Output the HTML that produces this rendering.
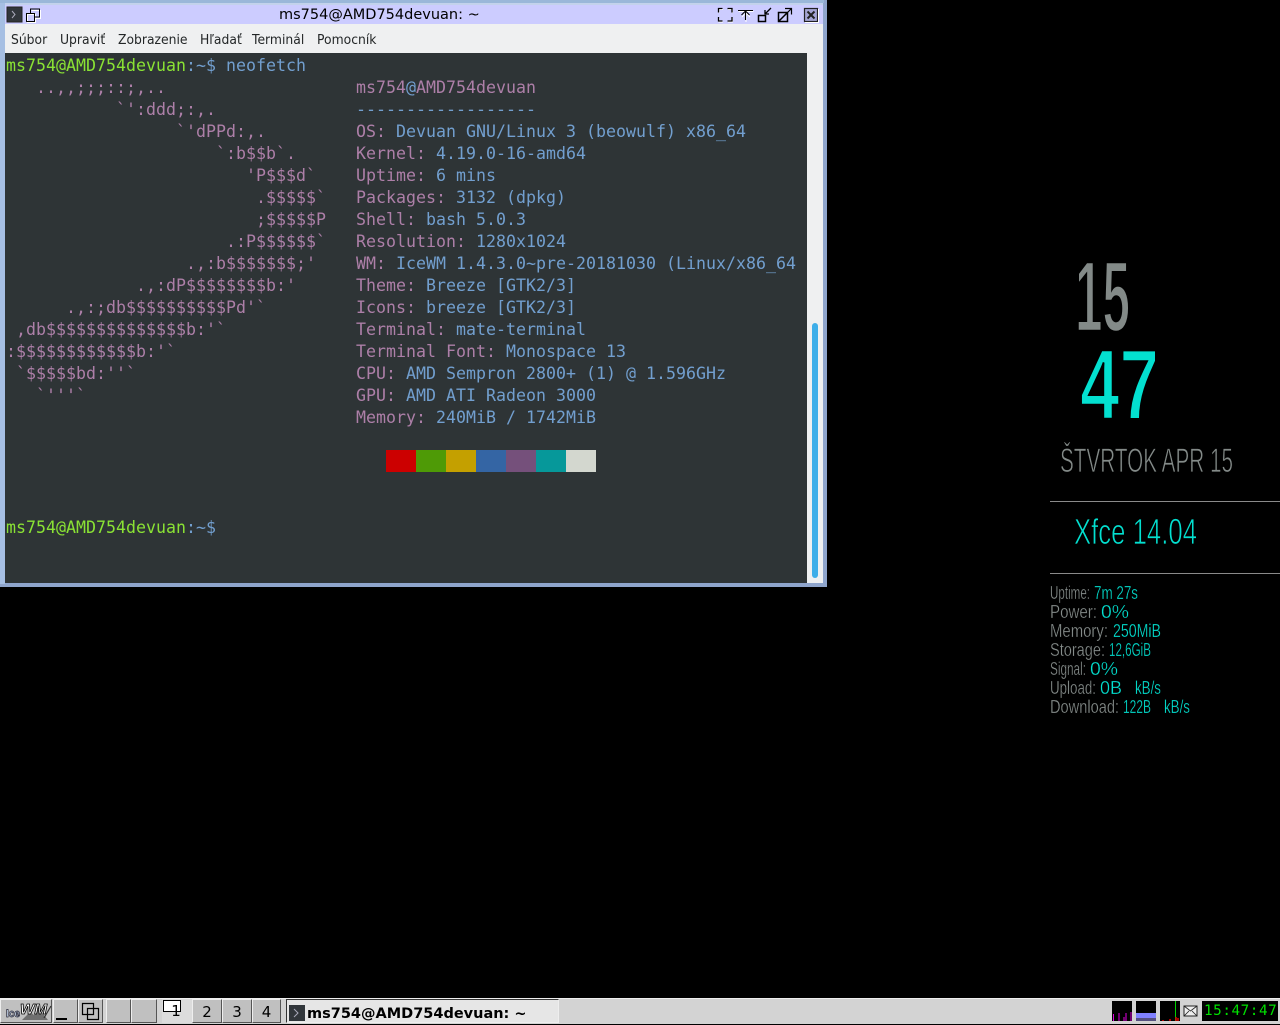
<!DOCTYPE html>
<html><head><meta charset="utf-8"><style>
html,body{margin:0;padding:0;background:#000;width:1280px;height:1024px;overflow:hidden}
div,span{box-sizing:border-box}
.a{position:absolute}
#term div{position:absolute;left:6px;height:22px;white-space:pre;font:16.61px/22px "DejaVu Sans Mono",monospace;color:#ad7fa8}
.b{color:#729fcf}.g{color:#8ae234}
.m{position:absolute;top:26px;height:29px;font:13.3px/30px "DejaVu Sans",sans-serif;color:#232627;white-space:pre;transform-origin:0 0;transform:scaleX(.93)}
.s{position:absolute;top:450px;width:30px;height:22px}
.btn{position:absolute;top:999px;height:24px;background:#c0c0c0;border:1px solid;border-color:#eee #555 #555 #eee;font:15px/24px "DejaVu Sans",sans-serif;color:#000;text-align:center}
</style></head><body>

<div class="a" style="left:0;top:0;width:827px;height:587px;background:#8fa5cc"></div>
<div class="a" style="left:0;top:0;width:824px;height:3px;background:#9ab7d9"></div>
<div class="a" style="left:0;top:3px;width:5px;height:581px;background:#a6bfe3"></div>
<div class="a" style="left:5px;top:3px;width:818px;height:2px;background:#c3d2ec"></div>
<div class="a" style="left:5px;top:5px;width:818px;height:19px;background:#ccccff"></div>
<div class="a" style="left:5px;top:24px;width:818px;height:29px;background:#eff0f1"></div>
<div class="a" style="left:807px;top:53px;width:16px;height:530px;background:#eff0f1"></div>
<div class="a" style="left:5px;top:53px;width:802px;height:530px;background:#2e3436"></div>
<div class="a" style="left:812px;top:323px;width:6px;height:255px;background:#3daee9;border-radius:3px"></div>

<div class="a" style="left:279px;top:6px;height:19px;font:14.5px/18px 'DejaVu Sans',sans-serif;color:#000;white-space:pre">ms754@AMD754devuan: ~</div>

<svg class="a" style="left:0;top:0" width="830" height="26" viewBox="0 0 830 26">
<rect x="7" y="7" width="15" height="15" fill="#31363b" stroke="#222"/>
<path d="M12 11l3 3.500-3 3.500" fill="none" stroke="#aab" stroke-width="1"/>
<g fill="none" stroke="#fff"><path d="M27.500 14.500h8v8h-8zM31.500 10.500h9v8h-5"/></g>
<g fill="none" stroke="#000"><path d="M26.500 13.500h8v8h-8zM30.500 13v-4h9v8h-5"/></g>
<g fill="none" stroke="#fff"><path d="M719 13V9.500h4M728 9.500h4.500V13M719 18v4h4M728 22h4.500v-4"/></g>
<g fill="none" stroke="#000" stroke-width="1.300"><path d="M718.500 12.500V8.500h4M727.500 8.500h4.500v4M718.500 17v4h4M727.500 21h4.500v-4"/></g>
<path d="M738 10.500h15M745.500 21v-9M741.500 16l4-4 4 4" fill="none" stroke="#fff" transform="translate(.5 1)"/>
<path d="M738 10.500h15M745.500 20v-9M741.500 15l4-4 4 4" fill="none" stroke="#000" stroke-width="1.100"/>
<path d="M758.500 15.500h7v6h-7z" fill="none" stroke="#000" stroke-width="1.500"/>
<path d="M771 8l-6 6M765 10v4h4" fill="none" stroke="#000" stroke-width="1.300"/>
<path d="M778.500 12.500h9v9h-9zM779 21l8-8" fill="none" stroke="#000" stroke-width="1.500"/>
<path d="M785 8.500h6.500v6M791 9l-6 6" fill="none" stroke="#000" stroke-width="1.200"/>
<rect x="804.500" y="8.500" width="13" height="13" fill="#a5a5d5" stroke="#222" stroke-width="1.200"/>
<path d="M807.500 11.500l7 7M814.500 11.500l-7 7" stroke="#222" stroke-width="2"/>
<path d="M818.500 9v13.500H805" fill="none" stroke="#fff"/>
</svg>

<div class="m" style="left:11px">Súbor</div>
<div class="m" style="left:60px">Upraviť</div>
<div class="m" style="left:118px">Zobrazenie</div>
<div class="m" style="left:200px">Hľadať</div>
<div class="m" style="left:252px">Terminál</div>
<div class="m" style="left:317px">Pomocník</div>

<div id="term">
<div style="top:55px"><span class="g">ms754@AMD754devuan</span><span class="b">:~$ neofetch</span></div>
<div style="top:77px">   ..,,;;;::;,..                   ms754<span class="b">@</span>AMD754devuan</div>
<div style="top:99px">           `':ddd;:,.              <span class="b">------------------</span></div>
<div style="top:121px">                 `'dPPd:,.         OS: <span class="b">Devuan GNU/Linux 3 (beowulf) x86_64</span></div>
<div style="top:143px">                     `:b$$b`.      Kernel: <span class="b">4.19.0-16-amd64</span></div>
<div style="top:165px">                        'P$$$d`    Uptime: <span class="b">6 mins</span></div>
<div style="top:187px">                         .$$$$$`   Packages: <span class="b">3132 (dpkg)</span></div>
<div style="top:209px">                         ;$$$$$P   Shell: <span class="b">bash 5.0.3</span></div>
<div style="top:231px">                      .:P$$$$$$`   Resolution: <span class="b">1280x1024</span></div>
<div style="top:253px">                  .,:b$$$$$$$;'    WM: <span class="b">IceWM 1.4.3.0~pre-20181030 (Linux/x86_64</span></div>
<div style="top:275px">             .,:dP$$$$$$$$b:'      Theme: <span class="b">Breeze [GTK2/3]</span></div>
<div style="top:297px">      .,:;db$$$$$$$$$$Pd'`         Icons: <span class="b">breeze [GTK2/3]</span></div>
<div style="top:319px"> ,db$$$$$$$$$$$$$$b:'`             Terminal: <span class="b">mate-terminal</span></div>
<div style="top:341px">:$$$$$$$$$$$$b:'`                  Terminal Font: <span class="b">Monospace 13</span></div>
<div style="top:363px"> `$$$$$bd:''`                      CPU: <span class="b">AMD Sempron 2800+ (1) @ 1.596GHz</span></div>
<div style="top:385px">   `'''`                           GPU: <span class="b">AMD ATI Radeon 3000</span></div>
<div style="top:407px">                                   Memory: <span class="b">240MiB / 1742MiB</span></div>
<div style="top:517px"><span class="g">ms754@AMD754devuan</span><span class="b">:~$</span></div>
</div>
<div class="s" style="left:386px;background:#cc0000"></div>
<div class="s" style="left:416px;background:#4e9a06"></div>
<div class="s" style="left:446px;background:#c4a000"></div>
<div class="s" style="left:476px;background:#3465a4"></div>
<div class="s" style="left:506px;background:#75507b"></div>
<div class="s" style="left:536px;background:#06989a"></div>
<div class="s" style="left:566px;background:#d3d7cf"></div>

<svg class="a" style="left:1040px;top:240px" width="240" height="490" viewBox="1040 240 240 490" font-family="Liberation Sans, sans-serif" stroke="#000">
<text x="1075" y="331" font-size="100" font-weight="bold" fill="#838a88" stroke-width="2.500" textLength="55" lengthAdjust="spacingAndGlyphs">15</text>
<text x="1080" y="419" font-size="100" font-weight="bold" fill="#03e0d0" stroke-width="2.500" textLength="79" lengthAdjust="spacingAndGlyphs">47</text>
<text x="1060" y="472" font-size="34" fill="#838a88" stroke-width=".8" textLength="173" lengthAdjust="spacingAndGlyphs">ŠTVRTOK APR 15</text>
<text x="1074" y="544" font-size="36" fill="#03e0d0" stroke-width=".8" textLength="123" lengthAdjust="spacingAndGlyphs">Xfce 14.04</text>
<g font-size="18" stroke-width=".3">
<g fill="#868d8b">
<text x="1050" y="599" textLength="40" lengthAdjust="spacingAndGlyphs">Uptime:</text>
<text x="1050" y="618" textLength="47" lengthAdjust="spacingAndGlyphs">Power:</text>
<text x="1050" y="637" textLength="58" lengthAdjust="spacingAndGlyphs">Memory:</text>
<text x="1050" y="656" textLength="55" lengthAdjust="spacingAndGlyphs">Storage:</text>
<text x="1050" y="675" textLength="36" lengthAdjust="spacingAndGlyphs">Signal:</text>
<text x="1050" y="694" textLength="46" lengthAdjust="spacingAndGlyphs">Upload:</text>
<text x="1050" y="713" textLength="69" lengthAdjust="spacingAndGlyphs">Download:</text>
</g>
<g fill="#03e0d0">
<text x="1094" y="599" textLength="44" lengthAdjust="spacingAndGlyphs">7m 27s</text>
<text x="1101" y="618" textLength="28" lengthAdjust="spacingAndGlyphs">0%</text>
<text x="1113" y="637" textLength="48" lengthAdjust="spacingAndGlyphs">250MiB</text>
<text x="1109" y="656" textLength="42" lengthAdjust="spacingAndGlyphs">12,6GiB</text>
<text x="1090" y="675" textLength="28" lengthAdjust="spacingAndGlyphs">0%</text>
<text x="1100" y="694" textLength="22" lengthAdjust="spacingAndGlyphs">0B</text>
<text x="1135" y="694" textLength="26" lengthAdjust="spacingAndGlyphs">kB/s</text>
<text x="1123" y="713" textLength="28" lengthAdjust="spacingAndGlyphs">122B</text>
<text x="1164" y="713" textLength="26" lengthAdjust="spacingAndGlyphs">kB/s</text>
</g></g>
<rect x="1050" y="501" width="230" height="1" fill="#8a8a8a" stroke="none"/>
<rect x="1050" y="573" width="230" height="1" fill="#8a8a8a" stroke="none"/>
</svg>

<div class="a" style="left:0;top:998px;width:1280px;height:26px;background:#d3d3d3;border-top:1px solid #eee"></div>
<div class="btn" style="left:0;width:52px;overflow:hidden"></div>
<svg class="a" style="left:0;top:999px" width="52" height="24" viewBox="0 0 52 24">
<path d="M22 21l8-8 4 3 5-6 9 11z" fill="#6f6f6f"/>
<path d="M44 19l7-12" stroke="#333" stroke-width="1.200"/>
<text x="6" y="18" font-family="Liberation Sans, sans-serif" font-size="11" fill="#cfe0f5" stroke="#223" stroke-width=".7" font-weight="bold" textLength="14" lengthAdjust="spacingAndGlyphs">Ice</text>
<text x="20" y="15" font-family="Liberation Sans, sans-serif" font-size="15" font-style="italic" fill="#fff" stroke="#000" stroke-width=".8" font-weight="bold" textLength="27" lengthAdjust="spacingAndGlyphs">WM</text>
</svg>
<div class="btn" style="left:53px;width:25px"></div>
<div class="a" style="left:56px;top:1018px;width:11px;height:2px;background:#000"></div>
<div class="btn" style="left:78px;width:25px"></div>
<svg class="a" style="left:78px;top:999px" width="25" height="24"><path d="M4.500 4.500h11v11h-11zM9.500 9.500h11v11h-11z" fill="none" stroke="#000" stroke-width="1.200"/></svg>
<div class="btn" style="left:106px;width:25px"></div>
<div class="btn" style="left:131px;width:26px"></div>
<div class="btn" style="left:162px;width:30px;background:#dcdcdc;border-color:#dcdcdc"></div>
<div class="a" style="left:163px;top:1000px;width:18px;height:12px;border:1px solid #000;background:#fff"></div>
<div class="a" style="left:162px;top:999px;width:28px;height:24px;font:15px/24px 'DejaVu Sans',sans-serif;color:#000;text-align:center">1</div>
<div class="btn" style="left:192px;width:30px">2</div>
<div class="btn" style="left:222px;width:30px">3</div>
<div class="btn" style="left:252px;width:29px">4</div>
<div class="btn" style="left:286px;width:273px;background:#e6e6e6;border-color:#333 #eee #eee #333"></div>
<svg class="a" style="left:289px;top:1005px" width="16" height="16"><rect width="16" height="16" fill="#31363b"/><path d="M5 4l4 4-4 4" fill="none" stroke="#aab"/></svg>
<div class="a" style="left:307px;top:1003px;height:22px;font:bold 14.5px/22px 'DejaVu Sans',sans-serif;color:#000;white-space:pre">ms754@AMD754devuan: ~</div>

<svg class="a" style="left:1100px;top:998px" width="180" height="26" viewBox="1100 998 180 26">
<rect x="1112" y="1001" width="20" height="20" fill="#000"/>
<path d="M1113.500 1021v-7M1119 1021v-8M1124 1021v-4M1126 1021v-8M1131 1021v-9" stroke="#e000e0" stroke-width="1"/>
<rect x="1136" y="1001" width="20" height="20" fill="#000"/>
<rect x="1136" y="1013" width="20" height="5" fill="#8080ff"/>
<rect x="1136" y="1018" width="20" height="3" fill="#554f7f"/>
<rect x="1160" y="1001" width="20" height="20" fill="#000"/>
<path d="M1175.500 1021v-20" stroke="#00d000"/>
<path d="M1163 1021v-1M1170 1021v-2M1176 1021v-4M1178 1021v-3" stroke="#e00000" stroke-width="1.500"/>
<rect x="1184" y="1006" width="13" height="10" fill="#eee" stroke="#222"/>
<path d="M1184 1006l6.500 5 6.500-5M1184 1016l5-5M1197 1016l-5-5" fill="none" stroke="#222" stroke-width=".8"/>
<rect x="1202" y="1001" width="76" height="20" fill="#000"/>
</svg>
<div class="a" style="left:1204px;top:1002px;width:74px;height:19px;font:14.3px/18px 'DejaVu Sans Mono',monospace;color:#00e000;white-space:pre;letter-spacing:.55px;overflow:hidden">15:47:47</div>

</body></html>
